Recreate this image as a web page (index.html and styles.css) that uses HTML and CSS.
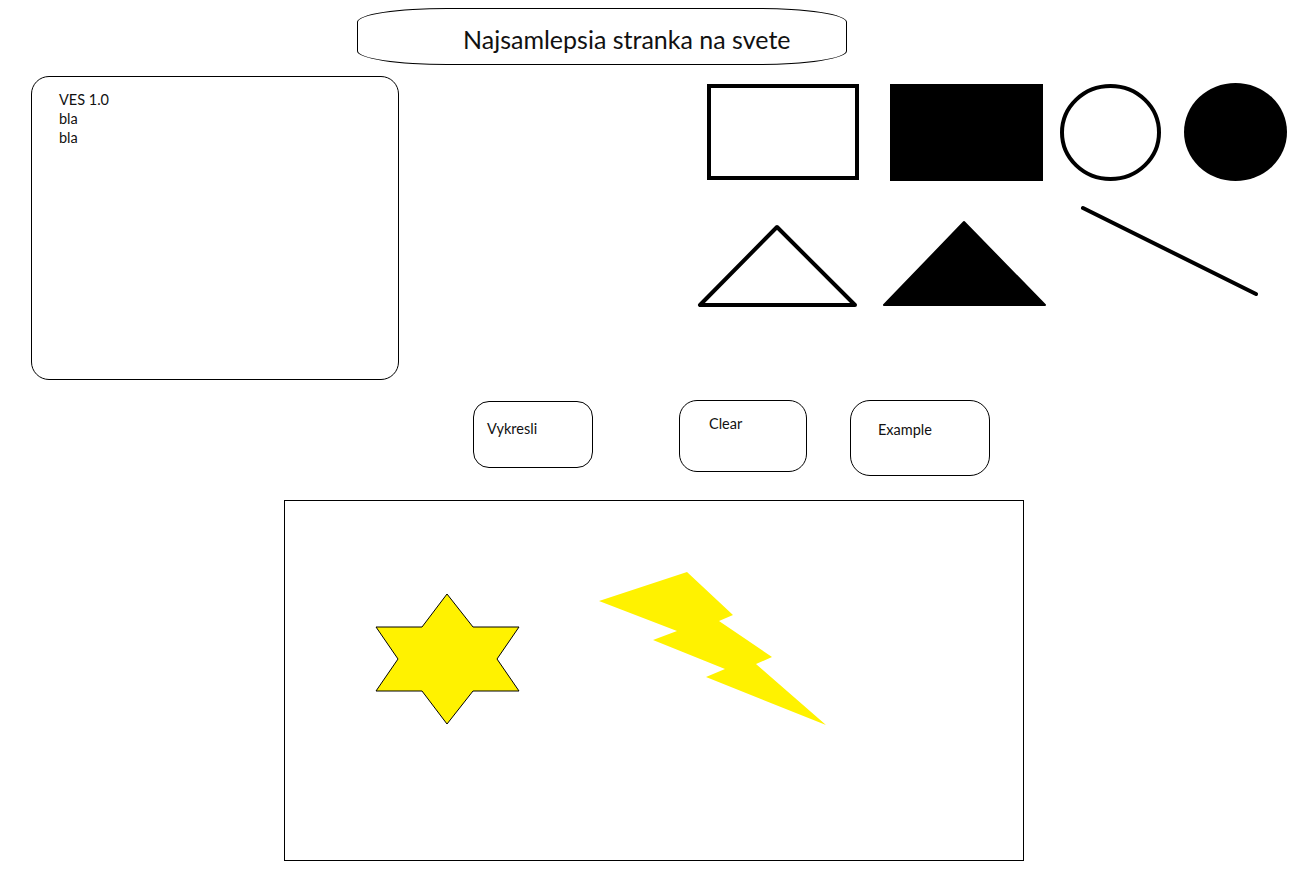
FILE: index.html
```html
<!DOCTYPE html>
<html lang="sk">
<head>
<meta charset="utf-8">
<title>Najsamlepsia stranka na svete</title>
<link rel="stylesheet" href="styles.css">
</head>
<body>
<div class="page">
  <header class="title"><h1>Najsamlepsia stranka na svete</h1></header>
  <div class="top-row">
    <div class="panel">
      <div>VES 1.0</div>
      <div>bla</div>
      <div>bla</div>
    </div>
    <svg class="shapes" width="600" height="250" viewBox="0 0 600 250">
      <rect x="19" y="10" width="148" height="92" fill="none" stroke="#000" stroke-width="4"/>
      <rect x="200" y="8" width="153" height="97" fill="#000"/>
      <ellipse cx="420.5" cy="56.5" rx="48.5" ry="46.5" fill="none" stroke="#000" stroke-width="4"/>
      <ellipse cx="545.5" cy="56" rx="51.5" ry="49" fill="#000"/>
      <polygon points="87,151 10,229 165,229" fill="none" stroke="#000" stroke-width="4" stroke-linejoin="round"/>
      <polygon points="274,146 194,229 355,229" fill="#000" stroke="#000" stroke-width="2" stroke-linejoin="round"/>
      <line x1="393" y1="132" x2="566" y2="218" stroke="#000" stroke-width="4" stroke-linecap="round"/>
    </svg>
  </div>
  <div class="buttons">
    <button class="btn btn-draw"><span>Vykresli</span></button>
    <button class="btn btn-clear"><span>Clear</span></button>
    <button class="btn btn-example"><span>Example</span></button>
  </div>
  <div class="canvas">
    <svg width="738" height="359" viewBox="0 0 738 359">
      <polygon points="162,93 188,126 234,126 212,158 234,190 188,190 162,223 137,190 91,190 113,158 91,126 137,126" fill="#fff200" stroke="#000" stroke-width="1"/>
      <polygon points="314,100 402,71 448,114 434,120 487,156 471,163 541,224 421,176 440,168 368,139 392,130" fill="#fff200"/>
    </svg>
  </div>
</div>
</body>
</html>
```
FILE: styles.css
```css
html, body {
  margin: 0;
  padding: 0;
  background: #fff;
}
body {
  font-family: Lato, "Open Sans", Arial, sans-serif;
  color: #111;
}
.page {
  width: 1301px;
  height: 870px;
  overflow: hidden;
}
.title {
  margin: 8px 0 0 357px;
  width: 490px;
  height: 57px;
  box-sizing: border-box;
  border: 1px solid #000;
  border-radius: 90px / 14px;
  display: flex;
  align-items: center;
  padding-left: 105px;
}
.title h1 {
  margin: 0;
  font-weight: normal;
  font-size: 25px;
  line-height: 30px;
  color: #111;
  padding-top: 5px;
}
.top-row {
  display: flex;
  align-items: flex-start;
  margin-top: 11px;
  padding-left: 31px;
}
.panel {
  width: 368px;
  height: 304px;
  box-sizing: border-box;
  border: 1px solid #000;
  border-radius: 18px;
  padding: 13px 0 0 27px;
  font-size: 14.5px;
  line-height: 19px;
}
.shapes {
  display: block;
  margin-left: 291px;
}
.buttons {
  display: flex;
  align-items: flex-start;
  margin-top: 20px;
  padding-left: 473px;
}
.btn {
  font-family: Lato, "Open Sans", Arial, sans-serif;
  font-size: 14.5px;
  line-height: 19px;
  color: #111;
  background: #fff;
  border: 1px solid #000;
  border-radius: 16px;
  box-sizing: border-box;
  display: flex;
  align-items: flex-start;
  justify-content: flex-start;
  text-align: left;
  margin: 0;
  cursor: pointer;
}
.btn-draw {
  width: 120px;
  height: 67px;
  padding: 17px 0 0 13px;
  margin-top: 1px;
}
.btn-clear {
  width: 128px;
  height: 72px;
  padding: 13px 0 0 29px;
  margin-left: 86px;
  border-radius: 18px;
}
.btn-example {
  width: 140px;
  height: 76px;
  padding: 19px 0 0 27px;
  margin-left: 43px;
  border-radius: 20px;
}
.canvas {
  margin: 24px 0 0 284px;
  width: 740px;
  height: 361px;
  box-sizing: border-box;
  border: 1px solid #000;
}
.canvas svg {
  display: block;
}
```
